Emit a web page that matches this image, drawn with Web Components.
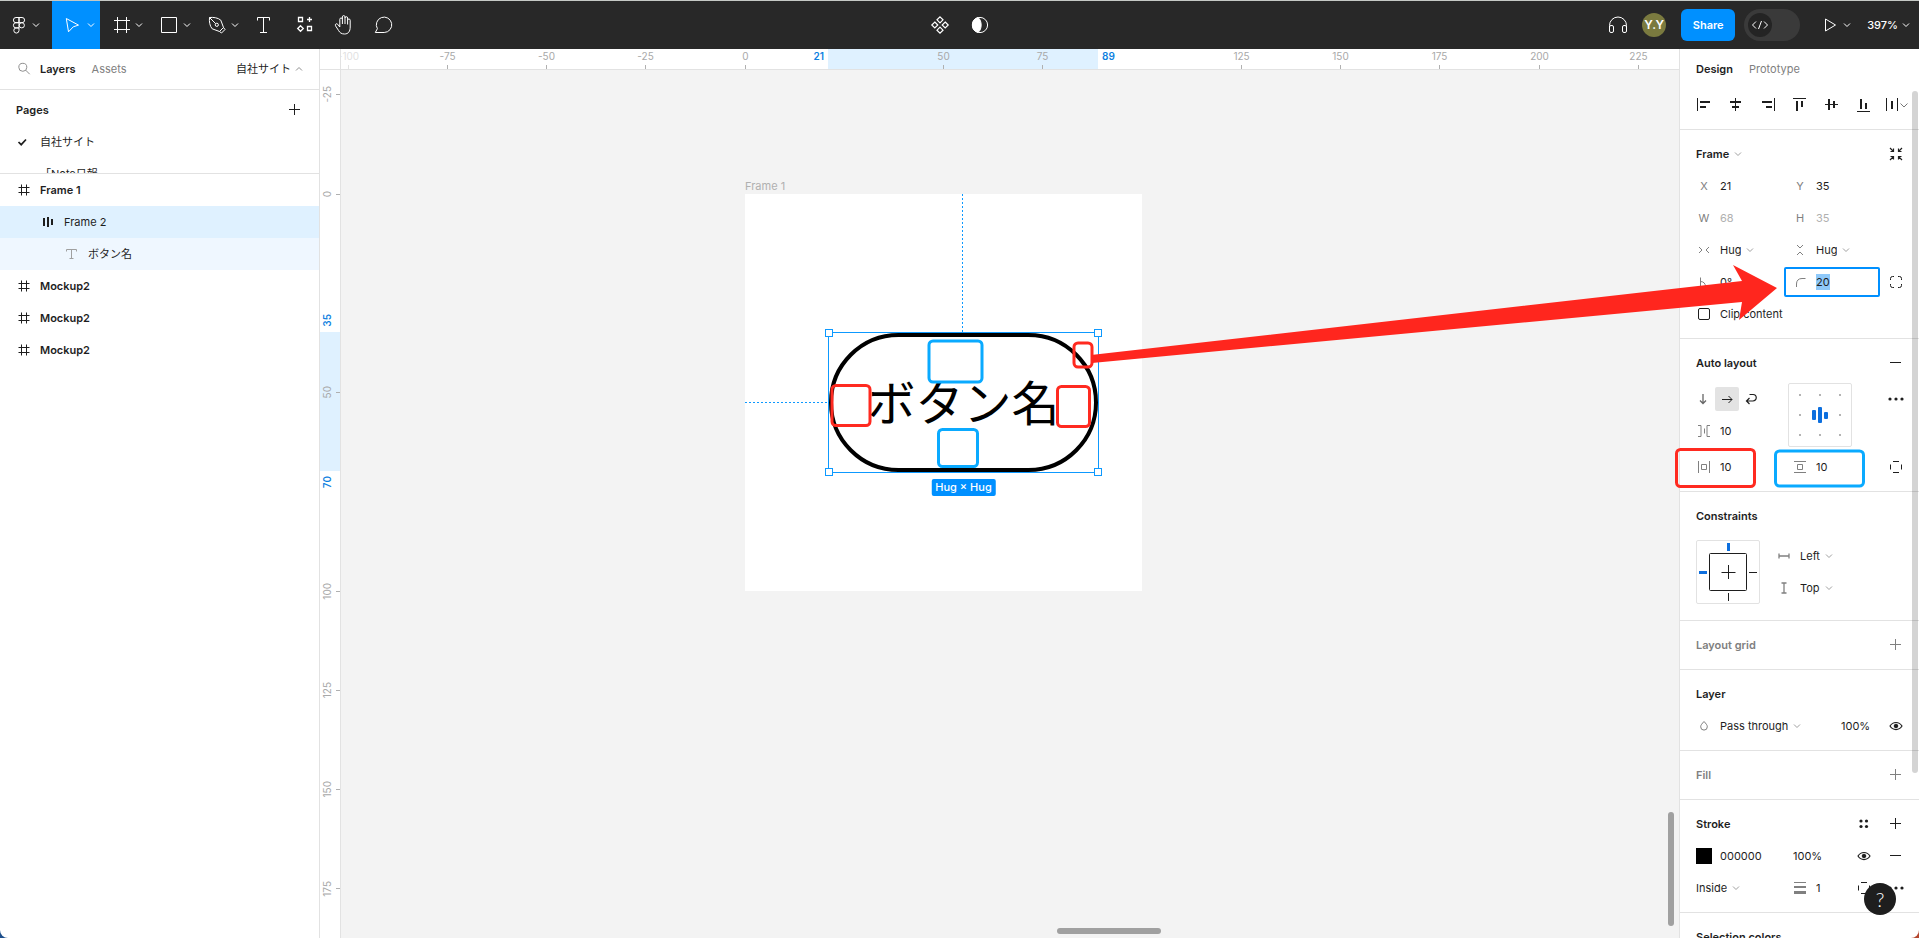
<!DOCTYPE html>
<html lang="ja">
<head>
<meta charset="utf-8">
<title>自社サイト</title>
<style>
  html, body {
    height: 100%;
    margin: 0;
  }
  body {
    background: linear-gradient(90deg, #1d4f8c 50%, #b5472f 50%);
    color: #1e1e1e;
    font-family: Inter, "Noto Sans CJK JP", sans-serif;
    font-size: 11px;
    line-height: 16px;
    overflow: hidden;
  }
</style>
</head>
<body>
<editor-app></editor-app>

<script>
const SHARED = `
  * { box-sizing: border-box; }
  :host { box-sizing: border-box; }
  button {
    display: flex;
    align-items: center;
    justify-content: center;
    margin: 0;
    padding: 0;
    border: 0;
    background: none;
    color: inherit;
    font: inherit;
  }
`;

// Each entry: [width, height, markup]
const ICONS = {
  logo: [24, 24, '<path d="M12 4.5H9a2.6 2.6 0 0 0 0 5.2h3zM12 4.5h3a2.6 2.6 0 0 1 0 5.2h-3zM12 9.7H9a2.6 2.6 0 0 0 0 5.2h3zM9 14.9a2.6 2.6 0 1 0 3 2.6v-2.6z"/><circle cx="14.8" cy="12.3" r="2.6"/>'],
  chevron: [10, 10, '<path d="M2 3.5l3 3 3-3"/>'],
  'chevron-up': [10, 10, '<path d="M2 6.5l3-3 3 3"/>'],
  move: [24, 24, '<path d="M5.3 5.5l12.2 6.6-5.2 1.7-4.8 5z"/>'],
  frame: [24, 24, '<path d="M8.5 4v16M17.5 4v16M5 7.5h16M5 16.5h16"/>'],
  rect: [24, 24, '<path d="M4.5 4.5h15v15h-15z"/>'],
  pen: [24, 24, '<path d="M4.5 4.5c4-.4 8.5.2 11.3 2.7l2.7 7.3-4 4-7.3-2.7C4.7 13 4.1 8.5 4.5 4.5zM4.5 4.5l6.2 6.2M18.5 14.5l1.5 2-3.5 3.5-2-1.5"/><circle cx="11.8" cy="11.8" r="1.6"/>'],
  text: [24, 24, '<path d="M5.5 7.5v-3h12v3M11.5 4.5v15M8 19.5h7"/>'],
  resources: [24, 24, '<path d="M6.5 4.5h4v4h-4zM15.5 13.5h4v4h-4zM17.5 4v5M15 6.5h5M8.5 12.7l2.8 2.8-2.8 2.8-2.8-2.8z" stroke-width="1.3"/>'],
  hand: [24, 24, '<path d="M7.8 14V6.3a1.3 1.3 0 0 1 2.6 0V11M10.4 6.5V3.9a1.3 1.3 0 0 1 2.6 0V11M13 5a1.3 1.3 0 0 1 2.6 0v6.5M15.6 7.3a1.3 1.3 0 0 1 2.6 0V14c0 4.5-2 7-5.7 7-3 0-4.7-1.2-6-3.6l-3-4.6c-.8-1.6 1.100-2.800 2.200-1.500L7.800 14"/>'],
  comment: [24, 24, '<path d="M12.2 19.500H3.300l2.100-3.800A7.700 7.700 0 1 1 12.200 19.500z"/>'],
  component: [24, 24, '<path d="M12 3.800l3 3-3 3-3-3zM6.800 9l3 3-3 3-3-3zM17.200 9l3 3-3 3-3-3zM12 14.200l3 3-3 3-3-3z" stroke-width="1.2"/>'],
  mask: [24, 24, '<circle cx="12" cy="12" r="7.6"/><path d="M10 4.5A7.8 7.8 0 0 0 10 19.5c4.2-2.7 4.2-12.3 0-15z" fill="currentColor"/>'],
  headphones: [24, 24, '<path d="M3.5 16v-3.500a8.500 8.500 0 0 1 17 0V16"/><rect x="3.5" y="12.5" width="4" height="7" rx="1.5"/><rect x="16.5" y="12.5" width="4" height="7" rx="1.5"/>'],
  code: [24, 24, '<path d="M8 8.500L4.500 12 8 15.500M16 8.500l3.500 3.500-3.500 3.500M13.500 8l-3 8"/>'],
  play: [24, 24, '<path d="M7.500 6l10 6-10 6z"/>'],
  search: [16, 16, '<circle cx="6.8" cy="6.3" r="4"/><path d="M9.700 9.200l4 4"/>'],
  plus: [16, 16, '<path d="M7.500 2v11M2 7.500h11"/>'],
  minus: [16, 16, '<path d="M2 7.500h11"/>'],
  check: [16, 16, '<path d="M2.500 8l2.700 2.700L10 5.500" stroke-width="1.7"/>'],
  'layer-frame': [16, 16, '<path d="M5.500 2.500v11M10.500 2.500v11M2.500 5.500h11M2.500 10.500h11"/>'],
  'layer-auto': [16, 16, '<path d="M4 4v8M8 3v10M12 5v6" stroke-width="2"/>'],
  'layer-text': [16, 16, '<path d="M2.500 5.500v-2h10v2M7.500 3.500v9M5.500 12.500h4"/>'],
  'align-left': [24, 24, '<path d="M5.500 5v13"/><path d="M8 9h10M8 14h6" stroke-width="2"/>'],
  'align-hcenter': [24, 24, '<path d="M11.500 5v13"/><path d="M6 9h11M8 14h7" stroke-width="2"/>'],
  'align-right': [24, 24, '<path d="M18.500 5v13"/><path d="M6 9h10M10 14h6" stroke-width="2"/>'],
  'align-top': [24, 24, '<path d="M5 5.500h13"/><path d="M9 8v10M14 8v6" stroke-width="2"/>'],
  'align-vcenter': [24, 24, '<path d="M5 11.500h13"/><path d="M9 6v11M14 8v7" stroke-width="2"/>'],
  'align-bottom': [24, 24, '<path d="M5 18.500h13"/><path d="M9 6v10M14 10v6" stroke-width="2"/>'],
  distribute: [32, 24, '<path d="M6.500 5v13M17.500 5v13"/><path d="M12 8v8" stroke-width="2"/><path d="M20.500 10.500l3.500 3.500 3.500-3.500" stroke="#777"/>'],
  shrink: [24, 24, '<path d="M6 6l3.500 3.500M9.500 6.500v3h-3M18 6l-3.500 3.500M14.500 6.500v3h3M6 18l3.500-3.500M6.500 14.500h3v3M18 18l-3.500-3.500M17.500 14.500h-3v3" stroke-width="1.200"/>'],
  'hug-h': [24, 24, '<path d="M7 9l3 3-3 3M17 9l-3 3 3 3"/>'],
  'hug-v': [24, 24, '<path d="M9 7l3 3 3-3M9 17l3-3 3 3"/>'],
  angle: [24, 24, '<path d="M8.500 7.500v9h9M8.500 11.500c3 0 5 2 5 5"/>'],
  radius: [24, 24, '<path d="M8.500 17v-3c0-3.500 2-5.500 5.500-5.500h3.500"/>'],
  corners: [24, 24, '<path d="M6.500 10V8.500a2 2 0 0 1 2-2H10M14 6.500h1.500a2 2 0 0 1 2 2V10M17.500 14v1.500a2 2 0 0 1-2 2H14M10 17.500H8.500a2 2 0 0 1-2-2V14"/>'],
  'arrow-down': [24, 24, '<path d="M12 7v9.500M9 13.500l3 3 3-3" stroke-width="1.300"/>'],
  'arrow-right': [24, 24, '<path d="M7 12.500h10M13.500 9l3.500 3.500-3.500 3.500"/>'],
  wrap: [24, 24, '<path d="M10.500 7.500h3.500a3 3 0 0 1 0 6.500H7.500M10.500 11l-3 3 3 3" stroke-width="1.200"/>'],
  gap: [24, 24, '<path d="M6 6.500h3v11H6M18 6.500h-3v11h3M12.500 9.500v5"/>'],
  'pad-h': [24, 24, '<path d="M6.500 6v12M17.500 6v12M9.500 9.500h5v5h-5z"/>'],
  'pad-v': [24, 24, '<path d="M6 6.500h12M6 17.500h12M9.500 9.500h5v5h-5z"/>'],
  sides: [24, 24, '<path d="M9 6.500h6M9 17.500h6M6.500 9.500v5M17.500 9.500v5"/>'],
  more: [24, 24, '<g fill="currentColor" stroke="none"><circle cx="6" cy="12" r="1.600"/><circle cx="12" cy="12" r="1.600"/><circle cx="18" cy="12" r="1.600"/></g>'],
  styles: [24, 24, '<g fill="currentColor" stroke="none"><circle cx="9" cy="9" r="1.600"/><circle cx="14.500" cy="9" r="1.600"/><circle cx="9" cy="14.500" r="1.600"/><circle cx="14.500" cy="14.500" r="1.600"/></g>'],
  'fix-h': [24, 24, '<path d="M7 12h10M7 9.500v5M17 9.500v5" stroke-width="1.300"/>'],
  'fix-v': [24, 24, '<path d="M12 7v10M9.500 7h5M9.500 17h5" stroke-width="1.300"/>'],
  drop: [24, 24, '<path d="M12 7.500c2 2.200 3.300 3.500 3.300 5.300a3.300 3.300 0 0 1-6.600 0c0-1.800 1.300-3.100 3.300-5.300z"/>'],
  eye: [24, 24, '<path d="M6 12c3-4.700 9-4.700 12 0-3 4.700-9 4.700-12 0z" stroke-width="1.200"/><circle cx="12" cy="12" r="1.800" fill="currentColor"/>'],
  weight: [24, 24, '<path d="M6 6.500h12"/><path d="M6 11h12" stroke-width="2"/><path d="M6 16.500h12" stroke-width="3"/>']
};

class UiIcon extends HTMLElement {
  constructor() {
    super();
    this.attachShadow({ mode: 'open' });
  }

  connectedCallback() {
    const [w, h, markup] = ICONS[this.getAttribute('name')];
    this.shadowRoot.innerHTML = `
      <style>
        :host { display: block; flex: none; width: ${w}px; height: ${h}px; }
        svg { display: block; }
      </style>
      <svg width="${w}" height="${h}" viewBox="0 0 ${w} ${h}" fill="none" stroke="currentColor" aria-hidden="true">${markup}</svg>
    `;
  }
}
customElements.define('ui-icon', UiIcon);

class ToolButton extends HTMLElement {
  constructor() {
    super();
    this.attachShadow({ mode: 'open' });
  }

  connectedCallback() {
    const menu = this.hasAttribute('menu');
    this.shadowRoot.innerHTML = `
      <style>
        ${SHARED}
        :host { display: block; height: 48px; }
        :host([active]) { background: #0090ff; }
        button { height: 48px; width: 40px; }
        button.menu { width: 48px; gap: 1px; padding-left: 5px; }
        :host([wide]) button.menu { width: 52px; gap: 0; padding-left: 0; padding-right: 4px; }
      </style>
      <button class="${menu ? 'menu' : ''}" aria-label="${this.getAttribute('label')}">
        <ui-icon name="${this.getAttribute('icon')}"></ui-icon>
        ${menu ? '<ui-icon name="chevron"></ui-icon>' : ''}
      </button>
    `;
  }
}
customElements.define('tool-button', ToolButton);

class AppToolbar extends HTMLElement {
  constructor() {
    super();
    this.attachShadow({ mode: 'open' });
    this.shadowRoot.innerHTML = `
      <style>
        ${SHARED}
        :host {
          display: grid;
          grid-template-columns: 1fr auto 1fr;
          height: 49px;
          flex: none;
          border-top: 1px solid #c5c9c5;
          background: #282828;
          color: #fff;
        }
        .group { display: flex; align-items: center; }
        .end { justify-content: flex-end; padding-right: 8px; }
        .avatar {
          width: 24px;
          height: 24px;
          margin: 0 15px 0 12px;
          border-radius: 50%;
          background: #7a7a3f;
          font-size: 12px;
          font-weight: 600;
          line-height: 24px;
          text-align: center;
        }
        .share {
          width: 54px;
          height: 32px;
          margin-right: 9px;
          border-radius: 6px;
          background: #0090ff;
          font-weight: 600;
        }
        .dev {
          width: 56px;
          height: 32px;
          margin-right: 18px;
          padding: 0 4px;
          border-radius: 16px;
          background: #3a3a3a;
          justify-content: flex-start;
        }
        .dev ui-icon { border-radius: 50%; background: #242424; }
        .zoom { gap: 3px; margin-left: 15px; font-weight: 500; }
      </style>
      <div class="group">
        <tool-button icon="logo" label="Main menu" menu wide></tool-button>
        <tool-button icon="move" label="Move" menu active></tool-button>
        <tool-button icon="frame" label="Region tools" menu></tool-button>
        <tool-button icon="rect" label="Shape tools" menu></tool-button>
        <tool-button icon="pen" label="Drawing tools" menu></tool-button>
        <tool-button icon="text" label="Text"></tool-button>
        <tool-button icon="resources" label="Resources"></tool-button>
        <tool-button icon="hand" label="Hand tool"></tool-button>
        <tool-button icon="comment" label="Add comment"></tool-button>
      </div>
      <div class="group">
        <tool-button icon="component" label="Create component"></tool-button>
        <tool-button icon="mask" label="Use as mask"></tool-button>
      </div>
      <div class="group end">
        <button aria-label="Audio"><ui-icon name="headphones"></ui-icon></button>
        <div class="avatar">Y.Y</div>
        <button class="share">Share</button>
        <button class="dev" role="switch" aria-checked="false" aria-label="Dev Mode"><ui-icon name="code"></ui-icon></button>
        <button aria-label="Present"><ui-icon name="play"></ui-icon><ui-icon name="chevron"></ui-icon></button>
        <button class="zoom">397% <ui-icon name="chevron"></ui-icon></button>
      </div>
    `;
  }
}
customElements.define('app-toolbar', AppToolbar);

class LayerRow extends HTMLElement {
  constructor() {
    super();
    this.attachShadow({ mode: 'open' });
  }

  connectedCallback() {
    const depth = Number(this.getAttribute('depth') || 0);
    const icon = this.getAttribute('icon');
    this.shadowRoot.innerHTML = `
      <style>
        ${SHARED}
        :host {
          display: flex;
          align-items: center;
          gap: 8px;
          height: 32px;
          padding-left: ${16 + depth * 24}px;
        }
        :host([strong]) { font-weight: 600; }
        :host([selected]) { background: #dff1ff; }
        :host([within]) { background: #eff7ff; }
        .cell { width: 16px; }
        :host([within]) .cell { color: #a0a0a0; }
      </style>
      <span class="cell">${icon ? `<ui-icon name="${icon}"></ui-icon>` : ''}</span>
      <slot></slot>
    `;
  }
}
customElements.define('layer-row', LayerRow);

class LayersPanel extends HTMLElement {
  constructor() {
    super();
    this.attachShadow({ mode: 'open' });
    this.shadowRoot.innerHTML = `
      <style>
        ${SHARED}
        :host {
          display: block;
          width: 320px;
          border-right: 1px solid #e2e2e2;
          background: #fff;
          overflow: hidden;
        }
        .tabs {
          display: flex;
          align-items: center;
          height: 41px;
          padding: 0 15px 0 16px;
          border-bottom: 1px solid #e2e2e2;
        }
        .tabs ui-icon { color: #8f8f8f; }
        .on { margin: 0 16px 0 8px; font-weight: 600; }
        .off { color: #808080; }
        .page { gap: 3px; margin-left: auto; }
        .pages {
          height: 84px;
          border-bottom: 1px solid #e2e2e2;
          overflow: hidden;
        }
        header {
          display: flex;
          align-items: center;
          justify-content: space-between;
          height: 36px;
          padding: 4px 16px 0 16px;
          font-weight: 600;
        }
      </style>
      <div class="tabs">
        <ui-icon name="search"></ui-icon>
        <button class="on">Layers</button>
        <button class="off">Assets</button>
        <button class="page">自社サイト <ui-icon name="chevron-up"></ui-icon></button>
      </div>
      <div class="pages">
        <header>Pages <button aria-label="Add page"><ui-icon name="plus"></ui-icon></button></header>
        <layer-row icon="check">自社サイト</layer-row>
        <layer-row>「Note日報</layer-row>
      </div>
      <layer-row icon="layer-frame" strong>Frame 1</layer-row>
      <layer-row icon="layer-auto" depth="1" selected>Frame 2</layer-row>
      <layer-row icon="layer-text" depth="2" within>ボタン名</layer-row>
      <layer-row icon="layer-frame" strong>Mockup2</layer-row>
      <layer-row icon="layer-frame" strong>Mockup2</layer-row>
      <layer-row icon="layer-frame" strong>Mockup2</layer-row>
    `;
  }
}
customElements.define('layers-panel', LayersPanel);

// Zoom of the canvas and where its 0,0 lies
const SCALE = 3.97;
const ORIGIN = { x: 404, y: 124 };

class CanvasRuler extends HTMLElement {
  constructor() {
    super();
    this.attachShadow({ mode: 'open' });
  }

  connectedCallback() {
    const vertical = this.hasAttribute('vertical');
    const origin = vertical ? ORIGIN.y : ORIGIN.x;
    const at = (v) => Math.floor(origin + v * SCALE);
    const from = Number(this.getAttribute('from'));
    const to = Number(this.getAttribute('to'));
    const values = this.getAttribute('marks').split(' ').map(Number);

    // the mark at the very edge is faded out
    const marks = values.map((v) => `
      <span class="mark" style="--at: ${at(v)}px; --fade: ${v === -100 ? 0.35 : 1}"><b>${v}</b><i></i></span>
    `).join('');

    this.shadowRoot.innerHTML = `
      <style>
        ${SHARED}
        :host {
          display: block;
          position: relative;
          overflow: hidden;
          background: #fff;
          color: #a8a8a8;
          font-size: 10px;
          line-height: 14px;
        }
        :host([vertical]) { border-right: 1px solid #e2e2e2; }
        :host(:not([vertical])) { border-bottom: 1px solid #e2e2e2; }
        b { font-weight: 400; }
        .range { position: absolute; background: #dff1ff; }
        .mark, .end { position: absolute; }
        .mark { opacity: var(--fade); }
        i { position: absolute; background: #b0b0b0; }
        .end { color: #0d7fdf; font-weight: 600; }

        .h .range { top: 0; height: 20px; left: ${at(from)}px; width: ${at(to) - at(from)}px; }
        .h .mark { left: var(--at); top: 0; width: 1px; height: 20px; display: flex; justify-content: center; }
        .h i { left: 0; bottom: 0; width: 1px; height: 4px; }
        .h .start { right: calc(100% - ${at(from) - 4}px); }
        .h .stop { left: ${at(to) + 4}px; }

        .v .range { left: 0; width: 20px; top: ${at(from)}px; height: ${at(to) - at(from)}px; }
        .v .mark { top: var(--at); left: 0; height: 1px; width: 20px; display: flex; align-items: center; }
        .v i { top: 0; right: 0; height: 1px; width: 4px; }
        .v b, .v .end { writing-mode: vertical-rl; rotate: 180deg; }
        .v .start { bottom: calc(100% - ${at(from) - 5}px); }
        .v .stop { top: ${at(to) + 5}px; }
      </style>
      <div class="${vertical ? 'v' : 'h'}">
        <div class="range"></div>
        ${marks}
        <span class="end start">${from}</span>
        <span class="end stop">${to}</span>
      </div>
    `;
  }
}
customElements.define('canvas-ruler', CanvasRuler);

class SelectionBox extends HTMLElement {
  constructor() {
    super();
    this.attachShadow({ mode: 'open' });
    this.shadowRoot.innerHTML = `
      <style>
        ${SHARED}
        :host { display: block; position: absolute; border: 1px solid #0d99ff; }
        i {
          position: absolute;
          width: 8px;
          height: 8px;
          border: 1px solid #0d99ff;
          background: #fff;
        }
        .n { top: -4px; }
        .s { bottom: -4px; }
        .w { left: -4px; }
        .e { right: -4px; }
        .size {
          position: absolute;
          top: 100%;
          left: 50%;
          translate: -50% 0;
          margin-top: 7px;
          padding: 1px 4px;
          border-radius: 2px;
          background: #0090ff;
          color: #fff;
          font-weight: 500;
          line-height: 15px;
          white-space: nowrap;
        }
      </style>
      <slot></slot>
      <i class="n w"></i><i class="n e"></i><i class="s w"></i><i class="s e"></i>
      <span class="size">Hug × Hug</span>
    `;
  }
}
customElements.define('selection-box', SelectionBox);

class DesignCanvas extends HTMLElement {
  constructor() {
    super();
    this.attachShadow({ mode: 'open' });
    this.shadowRoot.innerHTML = `
      <style>
        ${SHARED}
        :host {
          display: grid;
          grid-template: 21px 1fr / 21px 1fr;
          min-width: 0;
          background: #f3f3f3;
        }
        .corner {
          border: solid #e2e2e2;
          border-width: 0 1px 1px 0;
          background: #fff;
        }
        .stage { position: relative; overflow: hidden; }
        .artboard {
          position: absolute;
          left: ${ORIGIN.x}px;
          top: ${ORIGIN.y}px;
          width: 397px;
          height: 397px;
          background: #fff;
        }
        .name { position: absolute; left: 0; bottom: 100%; color: #b0b0b0; }
        .pill {
          display: flex;
          align-items: center;
          justify-content: center;
          width: 100%;
          height: 100%;
          padding-bottom: 6px;
          border: 4px solid #000;
          border-radius: 70px;
          color: #000;
          font-family: "Noto Sans CJK JP", sans-serif;
          font-size: 48px;
          line-height: 64px;
          white-space: nowrap;
        }
        selection-box { left: 83px; top: 138px; width: 271px; height: 141px; }
        .guide { position: absolute; }
        .guide.v {
          left: 217px;
          top: 0;
          width: 1px;
          height: 138px;
          background: repeating-linear-gradient(#0d99ff 0 2px, transparent 2px 4px);
        }
        .guide.h {
          left: 0;
          top: 208px;
          width: 83px;
          height: 1px;
          background: repeating-linear-gradient(90deg, #0d99ff 0 2px, transparent 2px 4px);
        }
        .bar { position: absolute; border-radius: 3px; background: #a0a0a0; }
        .bar.v { right: 5px; bottom: 12px; width: 6px; height: 114px; }
        .bar.h { right: 518px; bottom: 4px; width: 104px; height: 6px; }
      </style>
      <div class="corner"></div>
      <canvas-ruler from="21" to="89" marks="-100 -75 -50 -25 0 50 75 125 150 175 200 225"></canvas-ruler>
      <canvas-ruler vertical from="35" to="70" marks="-25 0 50 100 125 150 175"></canvas-ruler>
      <div class="stage">
        <div class="artboard">
          <span class="name">Frame 1</span>
          <div class="guide v"></div>
          <div class="guide h"></div>
          <selection-box><div class="pill">ボタン名</div></selection-box>
        </div>
        <div class="bar v"></div>
        <div class="bar h"></div>
      </div>
    `;
  }
}
customElements.define('design-canvas', DesignCanvas);

class PropField extends HTMLElement {
  constructor() {
    super();
    this.attachShadow({ mode: 'open' });
  }

  connectedCallback() {
    this.shadowRoot.innerHTML = `
      <style>
        ${SHARED}
        :host { display: flex; align-items: center; height: 32px; min-width: 0; }
        label { display: flex; align-items: center; width: 100%; height: 30px; min-width: 0; }
        .icon { display: flex; flex: none; justify-content: center; width: 32px; color: #808080; }
        :host([bare]) .icon { width: 9px; }
        input {
          flex: 1;
          width: 0;
          min-width: 0;
          margin: 0 4px 0 0;
          padding: 0;
          border: 0;
          outline: 0;
          background: none;
          color: inherit;
          font: inherit;
        }
        input::selection { background: #8fc9fa; color: #1e1e1e; }
        :host([muted]) input { color: #b0b0b0; }
        :host([active]) label { border-radius: 2px; outline: 2px solid #0090ff; outline-offset: -2px; }
      </style>
      <label><span class="icon"><slot></slot></span><input aria-label="${this.getAttribute('label')}" value="${this.getAttribute('value')}"></label>
    `;
    if (this.hasAttribute('active')) {
      const input = this.shadowRoot.querySelector('input');
      input.focus();
      input.select();
    }
  }
}
customElements.define('prop-field', PropField);

class PropSelect extends HTMLElement {
  constructor() {
    super();
    this.attachShadow({ mode: 'open' });
  }

  connectedCallback() {
    this.shadowRoot.innerHTML = `
      <style>
        ${SHARED}
        :host { display: flex; align-items: center; height: 32px; min-width: 0; }
        label { display: flex; align-items: center; }
        .icon { display: flex; justify-content: center; width: 32px; color: #808080; }
        :host([bare]) .icon { width: 8px; }
        select {
          appearance: none;
          field-sizing: content;
          margin: 0;
          padding: 0;
          border: 0;
          background: none;
          color: inherit;
          font: inherit;
        }
        .arrow { margin-left: 4px; color: #a0a0a0; }
      </style>
      <label>
        <span class="icon"><slot></slot></span>
        <select aria-label="${this.getAttribute('label')}"><option>${this.getAttribute('value')}</option></select>
        <ui-icon class="arrow" name="chevron"></ui-icon>
      </label>
    `;
  }
}
customElements.define('prop-select', PropSelect);

class PropSection extends HTMLElement {
  constructor() {
    super();
    this.attachShadow({ mode: 'open' });
    this.shadowRoot.innerHTML = `
      <style>
        ${SHARED}
        :host {
          display: block;
          padding: 8px 7px 8px 8px;
          border-bottom: 1px solid #e2e2e2;
        }
        header { display: flex; align-items: center; height: 32px; padding-left: 8px; }
        .title { display: flex; align-items: center; margin-right: auto; font-weight: 600; }
        :host([empty]) header { color: #808080; }
      </style>
      <header><span class="title"><slot name="title"></slot></span><slot name="action"></slot></header>
      <slot></slot>
    `;
  }
}
customElements.define('prop-section', PropSection);

class AlignmentGrid extends HTMLElement {
  constructor() {
    super();
    this.attachShadow({ mode: 'open' });
    this.shadowRoot.innerHTML = `
      <style>
        ${SHARED}
        :host { display: block; width: 64px; height: 64px; border: 1px solid #e2e2e2; border-radius: 2px; }
        svg { display: block; }
      </style>
      <svg width="62" height="62" viewBox="0 0 62 62" aria-hidden="true">
        <path fill="#b3b3b3" d="M10 10h2v2h-2zM30 10h2v2h-2zM50 10h2v2h-2zM10 30h2v2h-2zM50 30h2v2h-2zM10 50h2v2h-2zM30 50h2v2h-2zM50 50h2v2h-2z"/>
        <g fill="#0d6fde">
          <rect x="23" y="26" width="4" height="10" rx="1"/>
          <rect x="29" y="23" width="4" height="16" rx="1"/>
          <rect x="35" y="28" width="4" height="7" rx="1"/>
        </g>
      </svg>
    `;
  }
}
customElements.define('alignment-grid', AlignmentGrid);

class ConstraintsBox extends HTMLElement {
  constructor() {
    super();
    this.attachShadow({ mode: 'open' });
    this.shadowRoot.innerHTML = `
      <style>
        ${SHARED}
        :host { display: block; width: 64px; height: 64px; border: 1px solid #e2e2e2; border-radius: 2px; }
        svg { display: block; }
      </style>
      <svg width="62" height="62" viewBox="0 0 62 62" fill="none" stroke="#1e1e1e" aria-hidden="true">
        <rect x="12.5" y="12.5" width="37" height="37" rx="1"/>
        <path d="M31.5 24v14M24.5 31.5h14M52 31.5h8M31.5 52v8"/>
        <path d="M31.5 2v8M2 31.5h8" stroke="#0d6fde" stroke-width="3"/>
      </svg>
    `;
  }
}
customElements.define('constraints-box', ConstraintsBox);

class DesignPanel extends HTMLElement {
  constructor() {
    super();
    this.attachShadow({ mode: 'open' });
    this.shadowRoot.innerHTML = `
      <style>
        ${SHARED}
        :host {
          display: block;
          position: relative;
          width: 240px;
          border-left: 1px solid #e2e2e2;
          background: #fff;
          overflow: hidden;
        }
        .tabs { display: flex; gap: 16px; height: 40px; padding-left: 16px; }
        .tabs .on { font-weight: 600; }
        .tabs .off { color: #808080; }
        .align {
          display: flex;
          height: 41px;
          padding: 0 7px 8px 8px;
          border-bottom: 1px solid #e2e2e2;
        }
        .align button, .act { width: 32px; height: 32px; }
        .act.faint { color: #808080; }
        .row { display: grid; grid-template-columns: 96px 96px 32px; }
        .clip { display: flex; align-items: center; height: 32px; }
        .clip input {
          appearance: none;
          width: 12px;
          height: 12px;
          margin: 0 10px;
          border: 1px solid #1e1e1e;
          border-radius: 2px;
        }
        .title-arrow { margin-left: 4px; color: #a0a0a0; }
        .auto { grid-template-rows: 32px 32px 4px 32px; padding-top: 4px; }
        .flow { display: flex; align-items: center; padding-left: 3px; }
        .flow button { width: 24px; height: 24px; border-radius: 2px; }
        .flow button:first-child { color: #666; }
        .flow .on { background: #e3e3e3; }
        alignment-grid { grid-area: 1 / 2 / 3 / 3; margin-left: 4px; }
        .gap { grid-area: 2 / 1; }
        .last { grid-row: 4; }
        .cons { display: flex; gap: 8px; padding: 8px; }
        .layer { grid-template-columns: 144px 48px 32px; }
        .stroke { grid-template-columns: 96px 64px 32px 32px; }
        .swatch { width: 16px; height: 16px; background: #000; }
        .thumb {
          position: absolute;
          top: 42px;
          right: 1px;
          width: 6px;
          height: 682px;
          border-radius: 3px;
          background: rgba(0, 0, 0, 0.17);
        }
      </style>
      <div class="tabs">
        <button class="on">Design</button>
        <button class="off">Prototype</button>
      </div>
      <div class="align">
        <button aria-label="Align left"><ui-icon name="align-left"></ui-icon></button>
        <button aria-label="Align horizontal centers"><ui-icon name="align-hcenter"></ui-icon></button>
        <button aria-label="Align right"><ui-icon name="align-right"></ui-icon></button>
        <button aria-label="Align top"><ui-icon name="align-top"></ui-icon></button>
        <button aria-label="Align vertical centers"><ui-icon name="align-vcenter"></ui-icon></button>
        <button aria-label="Align bottom"><ui-icon name="align-bottom"></ui-icon></button>
        <button aria-label="Distribute"><ui-icon name="distribute"></ui-icon></button>
      </div>

      <prop-section>
        <span slot="title">Frame</span>
        <ui-icon slot="title" class="title-arrow" name="chevron"></ui-icon>
        <button slot="action" class="act" aria-label="Resize to fit"><ui-icon name="shrink"></ui-icon></button>
        <div class="row">
          <prop-field label="X position" value="21">X</prop-field>
          <prop-field label="Y position" value="35">Y</prop-field>
        </div>
        <div class="row">
          <prop-field label="Width" value="68" muted>W</prop-field>
          <prop-field label="Height" value="35" muted>H</prop-field>
        </div>
        <div class="row">
          <prop-select label="Horizontal resizing" value="Hug"><ui-icon name="hug-h"></ui-icon></prop-select>
          <prop-select label="Vertical resizing" value="Hug"><ui-icon name="hug-v"></ui-icon></prop-select>
        </div>
        <div class="row">
          <prop-field label="Rotation" value="0°"><ui-icon name="angle"></ui-icon></prop-field>
          <prop-field label="Corner radius" value="20" active><ui-icon name="radius"></ui-icon></prop-field>
          <button class="act" aria-label="Independent corners"><ui-icon name="corners"></ui-icon></button>
        </div>
        <label class="clip"><input type="checkbox"> Clip content</label>
      </prop-section>

      <prop-section>
        <span slot="title">Auto layout</span>
        <button slot="action" class="act" aria-label="Remove auto layout"><ui-icon name="minus"></ui-icon></button>
        <div class="row auto">
          <div class="flow">
            <button aria-label="Vertical"><ui-icon name="arrow-down"></ui-icon></button>
            <button class="on" aria-label="Horizontal"><ui-icon name="arrow-right"></ui-icon></button>
            <button aria-label="Wrap"><ui-icon name="wrap"></ui-icon></button>
          </div>
          <alignment-grid></alignment-grid>
          <button class="act" aria-label="Advanced layout settings"><ui-icon name="more"></ui-icon></button>
          <prop-field class="gap" label="Gap" value="10"><ui-icon name="gap"></ui-icon></prop-field>
          <prop-field class="last" label="Horizontal padding" value="10"><ui-icon name="pad-h"></ui-icon></prop-field>
          <prop-field class="last" label="Vertical padding" value="10"><ui-icon name="pad-v"></ui-icon></prop-field>
          <button class="act last" aria-label="Individual padding"><ui-icon name="sides"></ui-icon></button>
        </div>
      </prop-section>

      <prop-section>
        <span slot="title">Constraints</span>
        <div class="cons">
          <constraints-box></constraints-box>
          <div>
            <prop-select label="Horizontal constraint" value="Left"><ui-icon name="fix-h"></ui-icon></prop-select>
            <prop-select label="Vertical constraint" value="Top"><ui-icon name="fix-v"></ui-icon></prop-select>
          </div>
        </div>
      </prop-section>

      <prop-section empty>
        <span slot="title">Layout grid</span>
        <button slot="action" class="act faint" aria-label="Add layout grid"><ui-icon name="plus"></ui-icon></button>
      </prop-section>

      <prop-section>
        <span slot="title">Layer</span>
        <div class="row layer">
          <prop-select label="Blend mode" value="Pass through"><ui-icon name="drop"></ui-icon></prop-select>
          <prop-field bare label="Layer opacity" value="100%"></prop-field>
          <button class="act" aria-label="Toggle layer"><ui-icon name="eye"></ui-icon></button>
        </div>
      </prop-section>

      <prop-section empty>
        <span slot="title">Fill</span>
        <button slot="action" class="act faint" aria-label="Add fill"><ui-icon name="plus"></ui-icon></button>
      </prop-section>

      <prop-section>
        <span slot="title">Stroke</span>
        <button slot="action" class="act" aria-label="Styles"><ui-icon name="styles"></ui-icon></button>
        <button slot="action" class="act" aria-label="Add stroke"><ui-icon name="plus"></ui-icon></button>
        <div class="row stroke">
          <prop-field label="Stroke colour" value="000000"><span class="swatch"></span></prop-field>
          <prop-field bare label="Stroke opacity" value="100%"></prop-field>
          <button class="act" aria-label="Toggle stroke"><ui-icon name="eye"></ui-icon></button>
          <button class="act" aria-label="Remove stroke"><ui-icon name="minus"></ui-icon></button>
        </div>
        <div class="row stroke">
          <prop-select bare label="Stroke position" value="Inside"></prop-select>
          <prop-field label="Stroke weight" value="1"><ui-icon name="weight"></ui-icon></prop-field>
          <button class="act" aria-label="Strokes per side"><ui-icon name="sides"></ui-icon></button>
          <button class="act" aria-label="Advanced stroke"><ui-icon name="more"></ui-icon></button>
        </div>
      </prop-section>

      <prop-section>
        <span slot="title">Selection colors</span>
      </prop-section>
      <div class="thumb"></div>
    `;
  }
}
customElements.define('design-panel', DesignPanel);

// Callouts drawn over the whole editor
class MarkupLayer extends HTMLElement {
  constructor() {
    super();
    this.attachShadow({ mode: 'open' });
    this.shadowRoot.innerHTML = `
      <style>
        :host { display: block; position: absolute; inset: 0; overflow: hidden; pointer-events: none; }
        svg { display: block; }
      </style>
      <svg width="1919" height="938" viewBox="0 0 1919 938" fill="none" stroke-width="3" aria-hidden="true">
        <g stroke="#0aaaff">
          <rect x="929" y="341" width="53" height="41" rx="4"/>
          <rect x="938.5" y="429.5" width="39" height="37" rx="4"/>
          <rect x="1775.5" y="451" width="88" height="35" rx="4"/>
        </g>
        <g stroke="#ff2a20">
          <rect x="832" y="385.5" width="38" height="40" rx="4"/>
          <rect x="1057.5" y="386.5" width="32" height="40" rx="4"/>
          <rect x="1074" y="343" width="18" height="24" rx="4"/>
          <rect x="1676.5" y="449.5" width="78" height="37" rx="4"/>
        </g>
        <path fill="#ff261e" d="M1091 355L1742 281 1733 265 1777 288 1739 320 1742 302 1092 363z"/>
      </svg>
    `;
  }
}
customElements.define('markup-layer', MarkupLayer);

class HelpButton extends HTMLElement {
  constructor() {
    super();
    this.attachShadow({ mode: 'open' });
    this.shadowRoot.innerHTML = `
      <style>
        ${SHARED}
        :host { display: block; position: absolute; right: 23px; bottom: 23px; }
        button {
          width: 32px;
          height: 32px;
          border-radius: 50%;
          background: #1e1e1e;
          color: #fff;
          font-family: Lato, sans-serif;
          font-size: 20px;
          font-weight: 300;
        }
      </style>
      <button aria-label="Help and resources">?</button>
    `;
  }
}
customElements.define('help-button', HelpButton);

class EditorApp extends HTMLElement {
  constructor() {
    super();
    this.attachShadow({ mode: 'open' });
    this.shadowRoot.innerHTML = `
      <style>
        ${SHARED}
        :host {
          display: flex;
          flex-direction: column;
          position: relative;
          height: 100vh;
          border-radius: 0 0 8px 8px;
          overflow: hidden;
        }
        main {
          display: grid;
          grid-template-columns: auto 1fr auto;
          flex: 1;
          min-height: 0;
        }
      </style>
      <app-toolbar></app-toolbar>
      <main>
        <layers-panel></layers-panel>
        <design-canvas></design-canvas>
        <design-panel></design-panel>
      </main>
      <help-button></help-button>
      <markup-layer></markup-layer>
    `;
  }
}
customElements.define('editor-app', EditorApp);
</script>
</body>
</html>
